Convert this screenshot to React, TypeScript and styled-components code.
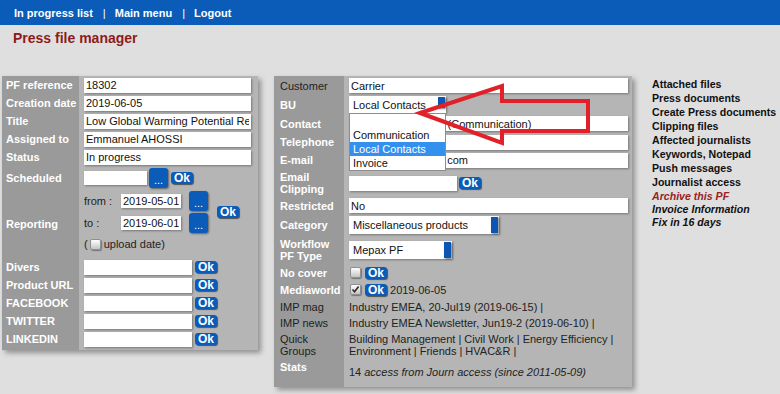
import React from 'react';
import styled, { createGlobalStyle } from 'styled-components';

const Global = createGlobalStyle`
  html, body { margin: 0; padding: 0; background: #dfdfdf; }
  body { font-family: "Liberation Sans", Arial, sans-serif; font-size: 11px; color: #222; }
  * { box-sizing: border-box; }
`;

const Page = styled.div`
  position: relative;
  width: 780px;
  height: 394px;
  overflow: hidden;
`;

const NavBar = styled.nav`
  height: 25px;
  background: #0a5cb8;
  display: flex;
  align-items: center;
  padding-left: 14px;
  color: #fff;
  font-weight: bold;
  font-size: 11px;
`;

const NavLink = styled.a`
  color: #fff;
  text-decoration: none;
`;

const NavSep = styled.span`
  font-weight: normal;
  margin: 0 9px 0 10px;
`;

const Title = styled.h1`
  margin: 0;
  padding: 5px 13px 0;
  font-size: 14px;
  line-height: 16px;
  color: #8e1b1b;
  font-weight: bold;
`;

const Main = styled.div`
  display: flex;
  align-items: flex-start;
  margin-top: 30px;
  padding-left: 2px;
`;

const Panel = styled.section<{ $w: number; $labelW: number; $ml?: number }>`
  width: ${(p) => p.$w}px;
  margin-left: ${(p) => p.$ml ?? 0}px;
  background: linear-gradient(to right, #9a9a9a ${(p) => p.$labelW}px, #b5b5b5 ${(p) => p.$labelW}px);
  box-shadow: 3px 3px 5px rgba(0, 0, 0, 0.35);
  padding-bottom: 2px;
`;

const Row = styled.div<{ $h: number; $labelW: number }>`
  display: grid;
  grid-template-columns: ${(p) => p.$labelW}px 1fr;
  height: ${(p) => p.$h}px;
  align-items: center;
`;

const Label = styled.div<{ $dark?: boolean; $plain?: boolean; $pl: number; $top?: boolean }>`
  padding-left: ${(p) => p.$pl}px;
  color: ${(p) => (p.$dark ? '#1e1e1e' : '#fff')};
  font-weight: ${(p) => (p.$plain ? 'normal' : 'bold')};
  font-size: 11px;
  line-height: 12px;
  align-self: ${(p) => (p.$top ? 'start' : 'center')};
  padding-top: ${(p) => (p.$top ? 2 : 0)}px;
`;

const Value = styled.div<{ $pr: number }>`
  display: flex;
  align-items: center;
  padding-left: 5px;
  padding-right: ${(p) => p.$pr}px;
  min-width: 0;
  color: #222;
  line-height: 12px;
`;

const Field = styled.input<{ $w?: number; $h?: number }>`
  width: ${(p) => (p.$w ? `${p.$w}px` : '100%')};
  height: ${(p) => p.$h ?? 15}px;
  border: 0;
  margin: 0;
  padding: 0 2px;
  background: #fff;
  font-family: "Liberation Sans", Arial, sans-serif;
  font-size: 11px;
  color: #111;
  box-shadow: 1px 1px 2px rgba(0, 0, 0, 0.35);
  outline: none;
`;

const OkBtn = styled.span<{ $ml?: number }>`
  display: inline-flex;
  align-items: center;
  justify-content: center;
  height: 12px;
  padding: 0 3px;
  margin-left: ${(p) => p.$ml ?? 2}px;
  background: #0a5cb8;
  color: #fff;
  font-weight: bold;
  font-size: 12px;
  line-height: 12px;
  border-radius: 3px;
  box-shadow: 1px 1px 1px rgba(0, 0, 0, 0.55);
`;

const DotsBtn = styled.span<{ $ml?: number }>`
  display: inline-flex;
  align-items: center;
  justify-content: center;
  width: 19px;
  height: 20px;
  padding-top: 4px;
  margin-left: ${(p) => p.$ml ?? 2}px;
  background: #0a5cb8;
  color: #fff;
  font-size: 11px;
  border-radius: 3px;
  box-shadow: 1px 1px 2px rgba(0, 0, 0, 0.45);
`;

const SelectBox = styled.div<{ $w: number; $h: number; $barH?: number }>`
  position: relative;
  width: ${(p) => p.$w}px;
  height: ${(p) => p.$h}px;
  background: #fff;
  padding-left: 4px;
  display: flex;
  align-items: center;
  font-size: 11px;
  color: #111;
  box-shadow: 1px 1px 2px rgba(0, 0, 0, 0.35);
  &::after {
    content: '';
    position: absolute;
    right: 1px;
    top: 1px;
    width: 7px;
    height: ${(p) => (p.$barH ? `${p.$barH}px` : `calc(100% - 2px)`)};
    background: #0a56b2;
    box-shadow: 1px 1px 2px rgba(0, 0, 0, 0.5);
  }
`;

const DropList = styled.ul`
  position: absolute;
  left: 0;
  top: 100%;
  width: 100%;
  margin: 0;
  padding: 0;
  list-style: none;
  background: #fff;
  border: 1px solid #8d8d8d;
  z-index: 5;
`;

const DropItem = styled.li<{ $active?: boolean }>`
  height: 14px;
  line-height: 14px;
  padding-left: 3px;
  font-size: 11px;
  background: ${(p) => (p.$active ? '#3490ee' : '#fff')};
  color: ${(p) => (p.$active ? '#fff' : '#111')};
`;

const Check = styled.span<{ $ml?: number }>`
  display: inline-flex;
  align-items: center;
  justify-content: center;
  width: 11px;
  height: 11px;
  margin-left: ${(p) => p.$ml ?? 0}px;
  margin-right: 3px;
  border: 1px solid #8f8f8f;
  border-radius: 2px;
  background: linear-gradient(#ffffff, #c4c4c4);
  box-shadow: 1px 1px 1px rgba(0, 0, 0, 0.35);
`;

const ReportGrid = styled.div`
  display: grid;
  grid-template-columns: 37px 60px 27px auto;
  grid-template-rows: 22px 22px 20px;
  align-items: center;
  padding: 1px 0 4px 5px;
  width: 100%;
`;

const RangeOk = styled.div`
  grid-column: 4;
  grid-row: 1 / span 2;
  align-self: center;
`;

const UploadLine = styled.div`
  grid-column: 1 / -1;
  display: flex;
  align-items: center;
`;

const Plain = styled.span<{ $ml?: number; $italic?: boolean }>`
  margin-left: ${(p) => p.$ml ?? 0}px;
  font-style: ${(p) => (p.$italic ? 'italic' : 'normal')};
  white-space: nowrap;
`;

const Lines = styled.div`
  line-height: 12px;
  white-space: nowrap;
`;

const SideMenu = styled.aside`
  margin-left: 20px;
  padding-top: 1px;
  display: flex;
  flex-direction: column;
`;

const SideLink = styled.a<{ $tone?: 'red' | 'dark'; $italic?: boolean; $lh?: number }>`
  display: block;
  font-size: 10.6px;
  font-weight: bold;
  line-height: ${(p) => p.$lh ?? 14}px;
  white-space: nowrap;
  text-decoration: none;
  font-style: ${(p) => (p.$italic ? 'italic' : 'normal')};
  color: ${(p) => (p.$tone === 'red' ? '#9a2222' : '#111')};
`;

const ArrowLayer = styled.svg`
  position: absolute;
  left: 0;
  top: 0;
  pointer-events: none;
  z-index: 10;
`;

const CheckMark = () => (
  <svg width="9" height="9" viewBox="0 0 9 9">
    <path d="M1.5 4.5 L3.6 6.8 L7.6 1.5" fill="none" stroke="#2a2a2a" strokeWidth="1.6" />
  </svg>
);

const L = 77;
const M = 70;

export default function App() {
  const leftRows: [string, string][] = [
    ['PF reference', '18302'],
    ['Creation date', '2019-06-05'],
    ['Title', 'Low Global Warming Potential Refrigerants'],
    ['Assigned to', 'Emmanuel AHOSSI'],
    ['Status', 'In progress'],
  ];
  const socials = ['Divers', 'Product URL', 'FACEBOOK', 'TWITTER', 'LINKEDIN'];

  return (
    <Page>
      <Global />
      <NavBar>
        <NavLink>In progress list</NavLink>
        <NavSep>|</NavSep>
        <NavLink>Main menu</NavLink>
        <NavSep>|</NavSep>
        <NavLink>Logout</NavLink>
      </NavBar>
      <Title>Press file manager</Title>

      <Main>
        <Panel $w={256} $labelW={L}>
          {leftRows.map(([k, v]) => (
            <Row key={k} $h={18} $labelW={L}>
              <Label $pl={4}>{k}</Label>
              <Value $pr={7}>
                <Field readOnly value={v} />
              </Value>
            </Row>
          ))}
          <Row $h={23} $labelW={L}>
            <Label $pl={4}>Scheduled</Label>
            <Value $pr={7}>
              <Field readOnly value="" $w={63} $h={14} />
              <DotsBtn $ml={2}>...</DotsBtn>
              <OkBtn $ml={3}>Ok</OkBtn>
            </Value>
          </Row>
          <Row $h={69} $labelW={L}>
            <Label $pl={4}>Reporting</Label>
            <ReportGrid>
              <Plain>from :</Plain>
              <Field readOnly value="2019-05-01" $w={60} $h={14} />
              <DotsBtn $ml={8}>...</DotsBtn>
              <RangeOk>
                <OkBtn $ml={9}>Ok</OkBtn>
              </RangeOk>
              <Plain>to :</Plain>
              <Field readOnly value="2019-06-01" $w={60} $h={14} />
              <DotsBtn $ml={8}>...</DotsBtn>
              <UploadLine>
                <Plain>(</Plain>
                <Check $ml={2} />
                <Plain>upload date)</Plain>
              </UploadLine>
            </ReportGrid>
          </Row>
          {socials.map((s) => (
            <Row key={s} $h={18} $labelW={L}>
              <Label $pl={4}>{s}</Label>
              <Value $pr={7}>
                <Field readOnly value="" $w={108} $h={15} />
                <OkBtn $ml={3}>Ok</OkBtn>
              </Value>
            </Row>
          ))}
        </Panel>

        <Panel $w={358} $labelW={M} $ml={16}>
          <Row $h={19} $labelW={M}>
            <Label $pl={6} $dark $plain>Customer</Label>
            <Value $pr={4}>
              <Field readOnly value="Carrier" />
            </Value>
          </Row>
          <Row $h={19} $labelW={M}>
            <Label $pl={6}>BU</Label>
            <Value $pr={4}>
              <SelectBox $w={97} $h={17} $barH={11}>
                Local Contacts
                <DropList>
                  <DropItem>&nbsp;</DropItem>
                  <DropItem>Communication</DropItem>
                  <DropItem $active>Local Contacts</DropItem>
                  <DropItem>Invoice</DropItem>
                </DropList>
              </SelectBox>
            </Value>
          </Row>
          <Row $h={19} $labelW={M}>
            <Label $pl={6}>Contact</Label>
            <Value $pr={4}>
              <Field readOnly value="Sandrine Morreaux (Communication)" />
            </Value>
          </Row>
          <Row $h={18} $labelW={M}>
            <Label $pl={6}>Telephone</Label>
            <Value $pr={4}>
              <Field readOnly value="" />
            </Value>
          </Row>
          <Row $h={18} $labelW={M}>
            <Label $pl={6}>E-mail</Label>
            <Value $pr={4}>
              <Field readOnly value="s.moreaux@carrier.com" />
            </Value>
          </Row>
          <Row $h={28} $labelW={M}>
            <Label $pl={6}>Email<br />Clipping</Label>
            <Value $pr={4}>
              <Field readOnly value="" $w={108} $h={15} />
              <OkBtn $ml={2}>Ok</OkBtn>
            </Value>
          </Row>
          <Row $h={17} $labelW={M}>
            <Label $pl={6}>Restricted</Label>
            <Value $pr={4}>
              <Field readOnly value="No" />
            </Value>
          </Row>
          <Row $h={22} $labelW={M}>
            <Label $pl={6}>Category</Label>
            <Value $pr={4}>
              <SelectBox $w={150} $h={18}>Miscellaneous products</SelectBox>
            </Value>
          </Row>
          <Row $h={28} $labelW={M}>
            <Label $pl={6}>Workflow<br />PF Type</Label>
            <Value $pr={4}>
              <SelectBox $w={103} $h={18}>Mepax PF</SelectBox>
            </Value>
          </Row>
          <Row $h={17} $labelW={M}>
            <Label $pl={6}>No cover</Label>
            <Value $pr={4}>
              <Check $ml={1} />
              <OkBtn $ml={1}>Ok</OkBtn>
            </Value>
          </Row>
          <Row $h={17} $labelW={M}>
            <Label $pl={6}>Mediaworld</Label>
            <Value $pr={4}>
              <Check $ml={1}>
                <CheckMark />
              </Check>
              <OkBtn $ml={1}>Ok</OkBtn>
              <Plain $ml={3}>2019-06-05</Plain>
            </Value>
          </Row>
          <Row $h={17} $labelW={M}>
            <Label $pl={6} $dark $plain>IMP mag</Label>
            <Value $pr={4}>
              <Plain>Industry EMEA, 20-Jul19 (2019-06-15) |</Plain>
            </Value>
          </Row>
          <Row $h={16} $labelW={M}>
            <Label $pl={6} $dark $plain>IMP news</Label>
            <Value $pr={4}>
              <Plain>Industry EMEA Newsletter, Jun19-2 (2019-06-10) |</Plain>
            </Value>
          </Row>
          <Row $h={28} $labelW={M}>
            <Label $pl={6} $dark $plain>Quick<br />Groups</Label>
            <Value $pr={4}>
              <Lines>
                Building Management | Civil Work | Energy Efficiency |<br />
                Environment | Friends | HVAC&amp;R |
              </Lines>
            </Value>
          </Row>
          <Row $h={26} $labelW={M}>
            <Label $pl={6} $top>Stats</Label>
            <Value $pr={4}>
              <Plain>14</Plain>
              <Plain $italic $ml={3}>access from Journ access (since 2011-05-09)</Plain>
            </Value>
          </Row>
        </Panel>

        <SideMenu>
          <SideLink>Attached files</SideLink>
          <SideLink>Press documents</SideLink>
          <SideLink>Create Press documents</SideLink>
          <SideLink>Clipping files</SideLink>
          <SideLink>Affected journalists</SideLink>
          <SideLink>Keywords, Notepad</SideLink>
          <SideLink>Push messages</SideLink>
          <SideLink>Journalist access</SideLink>
          <SideLink $tone="red" $italic>Archive this PF</SideLink>
          <SideLink $italic $lh={12.5}>Invoice Information</SideLink>
          <SideLink $italic $lh={12.5}>Fix in 16 days</SideLink>
        </SideMenu>
      </Main>

      <ArrowLayer width="780" height="394" viewBox="0 0 780 394">
        <polygon
          points="420,113 502,86 502,101 588,101 588,131 502,131 502,143"
          fill="none"
          stroke="#e2202a"
          strokeWidth="4"
          strokeLinejoin="miter"
        />
      </ArrowLayer>
    </Page>
  );
}
